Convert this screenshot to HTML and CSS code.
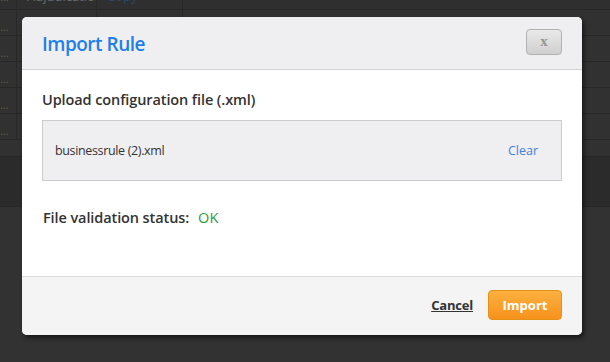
FILE: index.html
```html
<!DOCTYPE html>
<html>
<head>
<meta charset="utf-8">
<link rel="stylesheet" href="styles.css">
</head>
<body>
<div class="bg">
  <div class="row row-top"><div class="c1">…</div><div class="c2">Adjudication</div><div class="c3 link">Copy</div><div class="c4"></div></div>
  <div class="row"><div class="c1 dots">…</div><div class="c2"></div><div class="c3"></div><div class="c4"></div></div>
  <div class="row"><div class="c1 dots">…</div><div class="c2"></div><div class="c3"></div><div class="c4"></div></div>
  <div class="row"><div class="c1 dots">…</div><div class="c2"></div><div class="c3"></div><div class="c4"></div></div>
  <div class="row"><div class="c1 dots">…</div><div class="c2"></div><div class="c3"></div><div class="c4"></div></div>
  <div class="row"><div class="c1 dots">…</div><div class="c2"></div><div class="c3"></div><div class="c4"></div></div>
  <div class="row row-short"></div>
  <div class="row row-dark"></div>
  <div class="row row-rest"></div>
</div>

<div class="modal">
  <div class="modal-header">
    <h1 class="modal-title">Import Rule</h1>
    <button class="close-btn">x</button>
  </div>
  <div class="modal-body">
    <div class="label">Upload configuration file (.xml)</div>
    <div class="file-box">
      <span class="file-name">businessrule (2).xml</span>
      <a class="clear-link">Clear</a>
    </div>
    <div class="status">
      <span class="status-label">File validation status:</span>
      <span class="status-ok">OK</span>
    </div>
  </div>
  <div class="modal-footer">
    <a class="cancel-link">Cancel</a>
    <button class="import-btn">Import</button>
  </div>
</div>
</body>
</html>
```

FILE: styles.css
```css
html, body {
  margin: 0;
  padding: 0;
  width: 610px;
  height: 362px;
  overflow: hidden;
  background: #333333;
  font-family: "Open Sans", "Noto Sans", sans-serif;
}

.bg {
  margin-top: -16px;
  display: flex;
  flex-direction: column;
}

.row {
  display: flex;
  height: 25px;
  border-bottom: 1px solid #272727;
  background: #313131;
}

.row-top { background: #2f2f2f; }

.c1, .c2, .c3, .c4 {
  border-right: 1px solid #282828;
  color: #6b6b6b;
  font-size: 13px;
  line-height: 25px;
  overflow: hidden;
  white-space: nowrap;
  box-sizing: border-box;
}
.c1 { width: 17px; color: #6b5a44; font-size: 11px; }
.c2 { width: 80px; padding-left: 10px; }
.c3 { width: 86px; padding-left: 10px; }
.c4 { flex: 1; border-right: none; }
.link { color: #2d4868; }
.dots { letter-spacing: -1px; padding-top: 4px; }

.row-short { height: 16px; }
.row-dark { height: 49px; background: #2b2b2b; }
.row-rest { height: 160px; background: #323232; }

.modal {
  position: absolute;
  left: 22px;
  top: 17px;
  width: 560px;
  height: 318px;
  border-radius: 5px;
  overflow: hidden;
  display: flex;
  flex-direction: column;
  background: #fff;
  box-shadow: 2px 3px 4px rgba(0,0,0,0.5);
}

.modal-header {
  height: 53px;
  background: #efeff2;
  border-bottom: 1px solid #d2d2d4;
  display: flex;
  align-items: center;
  justify-content: space-between;
  padding: 0 20px 0 20px;
  box-sizing: border-box;
  flex-shrink: 0;
}

.modal-title {
  margin: 0;
  font-size: 19px;
  font-weight: 600;
  color: #1f7fe6;
  letter-spacing: -0.5px;
  padding-top: 1px;
}

.close-btn {
  width: 36px;
  height: 26px;
  margin-top: -2px;
  border: 1px solid #b2b2b2;
  border-radius: 4px;
  background: linear-gradient(#e9e9e9, #cfcfcf);
  color: #959595;
  font-family: "Liberation Serif", serif;
  font-weight: bold;
  font-size: 15px;
  padding: 0 0 3px;
  line-height: 20px;
}

.modal-body {
  flex: 1;
  padding: 20px 20px 0 20px;
  display: flex;
  flex-direction: column;
}

.label {
  font-size: 14.5px;
  font-weight: 600;
  color: #333;
  letter-spacing: -0.1px;
  line-height: 20px;
}

.file-box {
  margin-top: 10px;
  height: 61px;
  box-sizing: border-box;
  border: 1px solid #cccccc;
  background: #efeff2;
  display: flex;
  align-items: center;
  justify-content: space-between;
  padding: 0 23px 0 12px;
}

.file-name {
  font-size: 12.5px;
  color: #333;
  letter-spacing: -0.35px;
}

.clear-link {
  font-size: 12.5px;
  color: #3f7fe6;
}

.status {
  margin-top: 27px;
  display: flex;
  align-items: baseline;
  padding-left: 1px;
}

.status-label {
  font-size: 14.5px;
  font-weight: 600;
  color: #333;
  letter-spacing: -0.1px;
}

.status-ok {
  margin-left: 9px;
  font-size: 14.5px;
  color: #2e9a3e;
}

.modal-footer {
  height: 59px;
  flex-shrink: 0;
  box-sizing: border-box;
  border-top: 1px solid #dcdcdc;
  background: #f4f4f4;
  display: flex;
  align-items: center;
  justify-content: flex-end;
  padding: 0 20px 2px 0;
}

.cancel-link {
  font-size: 13px;
  font-weight: 700;
  color: #333;
  text-decoration: underline;
  margin-right: 15px;
  letter-spacing: -0.2px;
}

.import-btn {
  width: 74px;
  height: 30px;
  border: 1px solid #e39215;
  border-radius: 4px;
  background: linear-gradient(#fcb040, #f7921c);
  color: #fff;
  font-family: "Open Sans", sans-serif;
  font-weight: 700;
  font-size: 13px;
  padding: 0;
}
```
